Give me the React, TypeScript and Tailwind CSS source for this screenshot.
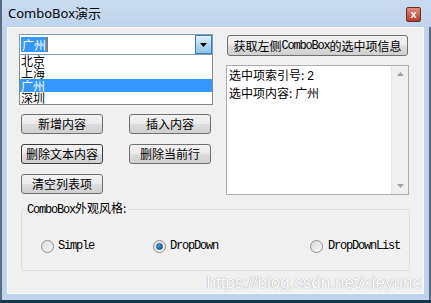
import React from 'react';

const cjk = '"Noto Sans CJK SC", sans-serif';

function Mono({ children }: { children: React.ReactNode }) {
    return <span className="font-['Liberation_Mono',monospace] text-[12px] tracking-[-1.2px]">{children}</span>;
}

function Btn({ children, focused = false, className = '' }: { children: React.ReactNode; focused?: boolean; className?: string }) {
    return (
        <div
            className={`flex items-center justify-center rounded-[3px] border text-[12px] leading-none text-black ${focused ? 'border-[#3c3c3c]' : 'border-[#707070]'} ${className}`}
            style={{ background: 'linear-gradient(#f2f2f2 0%, #ebebeb 48%, #dddddd 52%, #cfcfcf 100%)' }}
        >
            {children}
        </div>
    );
}

function Radio({ checked = false }: { checked?: boolean }) {
    return (
        <div className="flex h-[13px] w-[13px] items-center justify-center rounded-full border border-[#8f8f8f] bg-gradient-to-br from-[#dcdcdc] to-[#f8f8f8]">
            {checked && <div className="h-[7px] w-[7px] rounded-full border border-[#1b4f7a] bg-gradient-to-br from-[#4fb4ec] to-[#10578f]" />}
        </div>
    );
}

export default function App() {
    return (
        <div className="relative flex h-[303px] w-[431px] flex-col overflow-hidden bg-[#bfd4eb]" style={{ fontFamily: cjk }}>
            {/* title bar */}
            <div className="flex h-[27px] shrink-0 items-center justify-between border-l-2 border-[#5b6b7c] pl-[6px] pr-[10px] bg-gradient-to-b from-[#c9dbef] to-[#bfd4eb]">
                <span className="font-['Noto_Sans',sans-serif] text-[13px] text-black">
                    ComboBox<span style={{ fontFamily: cjk }}>演示</span>
                </span>
                <div className="mt-[1px] flex h-[15px] w-[15px] items-center justify-center rounded-[2px] border border-[#6d2a22] bg-gradient-to-b from-[#e08a7e] to-[#b33c2c] text-[11px] font-bold leading-none text-white font-['Liberation_Sans',sans-serif]">
                    x
                </div>
            </div>

            {/* frame + client */}
            <div className="flex h-[273px] border-l-2 border-r-2 border-[#5b6b7c]">
                <div className="ml-[5px] mr-[5px] flex h-[267px] flex-1 flex-col border border-white/60 bg-[#f0f0f0]">
                    <div className="flex pl-[11px] pt-[6px]">
                        {/* left column */}
                        <div className="flex w-[194px] flex-col">
                            <div className="flex h-[21px] border border-[#7f9db9] bg-white">
                                <div className="flex flex-1 items-center pl-[1px]">
                                    <span className="bg-[#3399ff] px-[1px] text-[12px] leading-[15px] text-white">广州</span>
                                    <span className="h-[15px] w-[1px] bg-[#c86400]" />
                                </div>
                                <div className="flex w-[17px] items-center justify-center border border-[#3c7fb1] bg-gradient-to-b from-[#e0f0fb] to-[#8cc2ea]">
                                    <svg width="7" height="4" viewBox="0 0 7 4"><path d="M0 0h7L3.5 4z" fill="#000" /></svg>
                                </div>
                            </div>
                            <div className="flex h-[50px] flex-col border border-t-0 border-[#828790] bg-white text-[12px] leading-[12px] text-black">
                                <div className="h-[12px] pl-[1px]">北京</div>
                                <div className="h-[12px] pl-[1px]">上海</div>
                                <div className="h-[13px] bg-[#3399ff] pl-[1px] leading-[13px] text-white">广州</div>
                                <div className="h-[12px] pl-[1px]">深圳</div>
                            </div>
                            <div className="ml-[2px] mt-[9px] grid grid-cols-[82px_82px] gap-x-[26px] gap-y-[10px]">
                                <Btn className="h-[20px]">新增内容</Btn>
                                <Btn className="h-[20px]">插入内容</Btn>
                                <Btn className="h-[20px]" focused>删除文本内容</Btn>
                                <Btn className="h-[20px]">删除当前行</Btn>
                                <Btn className="h-[20px]">清空列表项</Btn>
                            </div>
                        </div>

                        {/* right column */}
                        <div className="ml-[13px] flex w-[183px] flex-col">
                            <Btn className="ml-[1px] mt-[1px] h-[21px] w-[181px]">
                                获取左侧<Mono>ComboBox</Mono>的选中项信息
                            </Btn>
                            <div className="mt-[9px] flex h-[130px] border border-[#abadb3] bg-white">
                                <div className="flex-1 pl-[2px] pt-[1px] text-[12px] leading-[15px] text-black">
                                    <div>选中项索引号: <Mono>2</Mono></div>
                                    <div>选中项内容: 广州</div>
                                </div>
                                <div className="flex w-[17px] flex-col items-center justify-between border-l border-[#e6e6e6] bg-[#f0f0f0] py-[6px]">
                                    <svg width="7" height="4" viewBox="0 0 7 4"><path d="M3.5 0L7 4H0z" fill="#a0a0a0" /></svg>
                                    <svg width="7" height="4" viewBox="0 0 7 4"><path d="M0 0h7L3.5 4z" fill="#a0a0a0" /></svg>
                                </div>
                            </div>
                        </div>
                    </div>

                    {/* group box */}
                    <fieldset className="ml-[13px] mt-[6px] h-[70px] w-[389px] rounded-[3px] border border-[#d5dfe5] px-[3px]">
                        <legend className="px-[2px] text-[12px] leading-[14px] text-black">
                            <Mono>ComboBox</Mono>外观风格:
                        </legend>
                        <div className="mt-[20px] flex items-center text-black">
                            <div className="ml-[16px] flex items-center gap-[4px]">
                                <Radio />
                                <Mono>Simple</Mono>
                            </div>
                            <div className="ml-[59px] flex items-center gap-[4px]">
                                <Radio checked />
                                <Mono>DropDown</Mono>
                            </div>
                            <div className="ml-[92px] flex items-center gap-[5px]">
                                <Radio />
                                <Mono>DropDownList</Mono>
                            </div>
                        </div>
                    </fieldset>
                </div>
            </div>

            {/* bottom edge */}
            <div className="h-[3px] bg-[#143a4a]" />

            <div className="pointer-events-none absolute right-[10px] top-[273px] font-['Liberation_Sans',sans-serif] text-[17px] leading-[20px] text-white" style={{ textShadow: '0 0 1px #a8a8a8, 0 0 1px #a8a8a8' }}>
                https://blog.csdn.net/xieyunc
            </div>
        </div>
    );
}
